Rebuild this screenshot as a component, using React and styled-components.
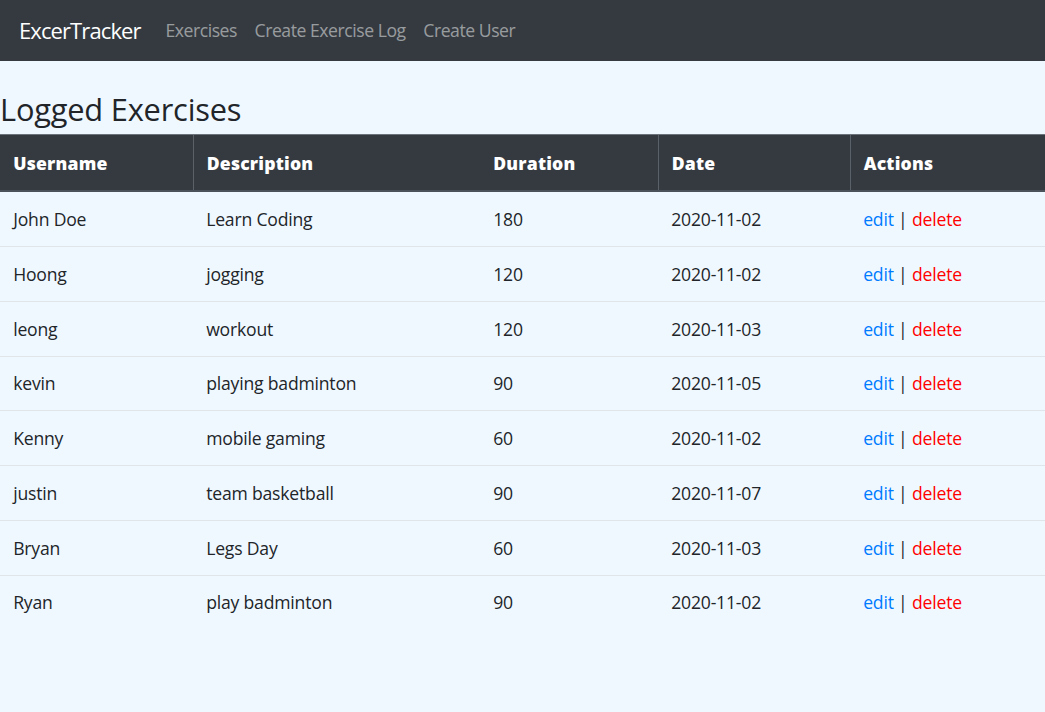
import React from "react";
import styled, { createGlobalStyle } from "styled-components";

const Global = createGlobalStyle`
  html, body { margin: 0; padding: 0; }
  *, *::before, *::after { box-sizing: border-box; }
  body {
    background: #f0f8ff;
    font-family: "Open Sans", "Noto Sans", sans-serif;
    font-size: 17.6px;
    line-height: 1.5;
    color: #212529;
  }
`;

const Nav = styled.nav`
  height: 61px;
  background: #343a40;
  display: flex;
  align-items: center;
  padding: 0 19px;
`;

const Brand = styled.a`
  color: #fff;
  font-size: 22px;
  margin-right: 16px;
  text-decoration: none;
  letter-spacing: -0.9px;
`;

const NavList = styled.div`
  display: flex;
`;

const NavLink = styled.a`
  color: rgba(255, 255, 255, 0.5);
  padding: 0 8.8px;
  text-decoration: none;
  letter-spacing: -0.45px;
`;

const Main = styled.main`
  padding-top: 30px;
`;

const Title = styled.h3`
  font-size: 30.8px;
  font-weight: 500;
  line-height: 1.2;
  margin: 0 0 6px;
  letter-spacing: -0.2px;
`;

const Table = styled.table`
  width: 100%;
  border-collapse: collapse;
  table-layout: fixed;
`;

const Th = styled.th`
  background: #343a40;
  color: #fff;
  text-align: left;
  font-weight: 800;
  padding: 15px 13.2px 14px;
  border-top: 1px solid #6c737a;
  border-bottom: 2px solid #4b525a;
  border-left: ${(p) => (p.$sep ? "1px solid #5a6168" : "none")};
  width: ${(p) => (p.$w ? `${p.$w}px` : "auto")};
  letter-spacing: 0.2px;
`;

const Td = styled.td`
  padding: 13.7px 13.2px;
  border-top: ${(p) => (p.$first ? "none" : "1px solid #e0e5ea")};
  white-space: nowrap;
  letter-spacing: -0.2px;
`;

const Edit = styled.a`
  color: #007bff;
  text-decoration: none;
`;

const Del = styled.a`
  color: #ff0000;
  text-decoration: none;
`;

const rows = [
  ["John Doe", "Learn Coding", "180", "2020-11-02"],
  ["Hoong", "jogging", "120", "2020-11-02"],
  ["leong", "workout", "120", "2020-11-03"],
  ["kevin", "playing badminton", "90", "2020-11-05"],
  ["Kenny", "mobile gaming", "60", "2020-11-02"],
  ["justin", "team basketball", "90", "2020-11-07"],
  ["Bryan", "Legs Day", "60", "2020-11-03"],
  ["Ryan", "play badminton", "90", "2020-11-02"],
];

export default function App() {
  return (
    <>
      <Global />
      <Nav>
        <Brand href="#">ExcerTracker</Brand>
        <NavList>
          <NavLink href="#">Exercises</NavLink>
          <NavLink href="#">Create Exercise Log</NavLink>
          <NavLink href="#">Create User</NavLink>
        </NavList>
      </Nav>
      <Main>
        <Title>Logged Exercises</Title>
        <Table>
          <thead>
            <tr>
              <Th $w={193}>Username</Th>
              <Th $w={287} $sep>Description</Th>
              <Th $w={178}>Duration</Th>
              <Th $w={192} $sep>Date</Th>
              <Th $sep>Actions</Th>
            </tr>
          </thead>
          <tbody>
            {rows.map((r, i) => (
              <tr key={i}>
                <Td $first={i === 0}>{r[0]}</Td>
                <Td $first={i === 0}>{r[1]}</Td>
                <Td $first={i === 0}>{r[2]}</Td>
                <Td $first={i === 0}>{r[3]}</Td>
                <Td $first={i === 0}>
                  <Edit href="#">edit</Edit> | <Del href="#">delete</Del>
                </Td>
              </tr>
            ))}
          </tbody>
        </Table>
      </Main>
    </>
  );
}
